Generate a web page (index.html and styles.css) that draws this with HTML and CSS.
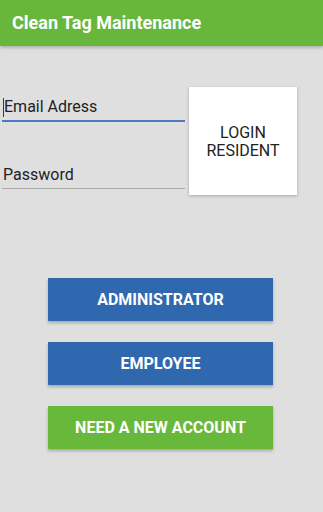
FILE: index.html
```html
<!DOCTYPE html>
<html lang="en">
<head>
  <meta charset="UTF-8" />
  <meta name="viewport" content="width=device-width, initial-scale=1.0" />
  <title>Clean Tag Maintenance</title>
  <link rel="stylesheet" href="styles.css">
</head>
<body>
  <div class="toolbar">Clean Tag Maintenance</div>

  <!-- Login fields and resident button -->
  <div class="login-row">
    <div class="fields">
      <div class="field field-active"><span class="cursor"></span>Email Adress</div>
      <div class="field field-password">Password</div>
    </div>
    <div class="resident-button">LOGIN<br>RESIDENT</div>
  </div>

  <!-- Other logins -->
  <div class="button-list">
    <div class="action-button blue">ADMINISTRATOR</div>
    <div class="action-button blue">EMPLOYEE</div>
    <div class="action-button green">NEED A NEW ACCOUNT</div>
  </div>
</body>
</html>
```

FILE: styles.css
```css
body {
  margin: 0;
  background: #dfdfdf;
  font-family: Roboto, 'Liberation Sans', sans-serif;
  height: 100vh;
  overflow: hidden;
}

/* Toolbar */
.toolbar {
  height: 46px;
  background: #67b73d;
  color: white;
  font-size: 18px;
  font-weight: bold;
  line-height: 46px;
  padding-left: 12px;
  box-shadow: 0 2px 3px rgba(0, 0, 0, 0.2);
}

/* Login row */
.login-row {
  display: flex;
  padding: 41px 0 0 2px;
}

.fields {
  width: 183px;
}

.field {
  font-size: 16px;
  line-height: 20px;
  color: #222;
  display: flex;
  align-items: center;
}

.field-active {
  margin-top: 10px;
  padding-bottom: 3px;
  border-bottom: 2px solid #4b7cbf;
}

.field-password {
  margin-top: 43px;
  padding-bottom: 3px;
  padding-left: 1px;
  border-bottom: 1px solid #a9a9a9;
}

.cursor {
  display: inline-block;
  width: 1px;
  height: 19px;
  background: #2a3a55;
  margin-left: 1px;
}

.resident-button {
  width: 108px;
  height: 108px;
  margin-left: 4px;
  background: white;
  box-shadow: 0 1px 3px rgba(0, 0, 0, 0.25);
  display: flex;
  align-items: center;
  justify-content: center;
  text-align: center;
  font-size: 16px;
  line-height: 18px;
  padding-top: 1px;
  box-sizing: border-box;
  color: #222;
}

/* Buttons */
.button-list {
  display: flex;
  flex-direction: column;
  gap: 21px;
  width: 225px;
  margin: 83px 0 0 48px;
}

.action-button {
  height: 43px;
  display: flex;
  align-items: center;
  justify-content: center;
  color: white;
  font-size: 16px;
  font-weight: bold;
  box-shadow: 0 2px 3px rgba(0, 0, 0, 0.25);
}

.blue {
  background: #2f68ae;
}

.green {
  background: #68b83b;
}
```
